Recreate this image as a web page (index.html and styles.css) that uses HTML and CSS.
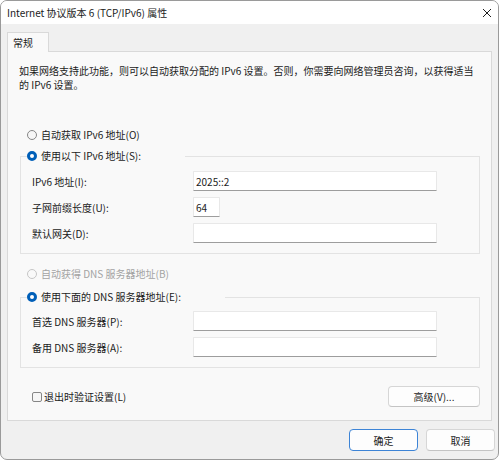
FILE: index.html
```html
<!DOCTYPE html>
<html lang="zh-CN">
<head>
    <meta charset="UTF-8">
    <meta name="viewport" content="width=device-width, initial-scale=1.0">
    <title>Internet 协议版本 6 (TCP/IPv6) 属性</title>
    <link rel="stylesheet" href="styles.css">
</head>
<body>
    <div class="window">
        <div class="titlebar">
            <span class="title">Internet 协议版本 6 (TCP/IPv6) 属性</span>
            <svg class="close" width="10" height="10" viewBox="0 0 10 10">
                <path d="M1 1 L9 9 M9 1 L1 9" stroke="#1f1f1f" stroke-width="1" fill="none"/>
            </svg>
        </div>
        <div class="content">
            <div class="tabs">
                <div class="tab">常规</div>
                <div class="tab-fill"></div>
            </div>
            <div class="panel">
                <p class="desc">如果网络支持此功能，则可以自动获取分配的 IPv6 设置。否则，你需要向网络管理员咨询，以获得适当<br>的 IPv6 设置。</p>

                <label class="option"><input type="radio" name="ip">自动获取 IPv6 地址(O)</label>
                <fieldset class="group">
                    <legend><label class="option"><input type="radio" name="ip" checked>使用以下 IPv6 地址(S):</label></legend>
                    <div class="fields">
                        <label for="addr">IPv6 地址(I):</label>
                        <input type="text" id="addr" class="field" value="2025::2">
                        <label for="prefix">子网前缀长度(U):</label>
                        <input type="text" id="prefix" class="field short" value="64">
                        <label for="gw">默认网关(D):</label>
                        <input type="text" id="gw" class="field">
                    </div>
                </fieldset>

                <label class="option option-dns disabled"><input type="radio" name="dns" disabled>自动获得 DNS 服务器地址(B)</label>
                <fieldset class="group group-dns">
                    <legend><label class="option"><input type="radio" name="dns" checked>使用下面的 DNS 服务器地址(E):</label></legend>
                    <div class="fields">
                        <label for="dns1">首选 DNS 服务器(P):</label>
                        <input type="text" id="dns1" class="field">
                        <label for="dns2">备用 DNS 服务器(A):</label>
                        <input type="text" id="dns2" class="field">
                    </div>
                </fieldset>

                <div class="bottom-row">
                    <label class="check"><input type="checkbox">退出时验证设置(L)</label>
                    <button class="btn btn-adv">高级(V)...</button>
                </div>
            </div>
            <div class="footer">
                <button class="btn btn-primary">确定</button>
                <button class="btn">取消</button>
            </div>
        </div>
    </div>
</body>
</html>
```

FILE: styles.css
```css
body {
    margin: 0;
    background: #ffffff;
    font-family: "Noto Sans CJK SC", sans-serif;
    font-size: 10px;
    color: #1b1b1b;
}
.window {
    box-sizing: border-box;
    width: 499px;
    height: 460px;
    border: 1px solid #9a9a9a;
    border-radius: 7px;
    background: #f0f0f0;
    overflow: hidden;
}
.titlebar {
    height: 23px;
    background: #ffffff;
    display: flex;
    align-items: center;
    justify-content: space-between;
    padding: 0 6px;
}
.title {
    line-height: 14px;
}
.close {
    margin-right: 0;
}
.content {
    padding: 8px 3px 0 6px;
}
.tabs {
    display: flex;
    margin-right: 3px;
}
.tab {
    box-sizing: border-box;
    width: 42px;
    height: 20px;
    padding-left: 5px;
    line-height: 19px;
    background: #f9f9f9;
    border: 1px solid #d9d9d9;
    border-bottom: none;
}
.tab-fill {
    flex: 1;
    border-bottom: 1px solid #d9d9d9;
}
.panel {
    margin-right: 3px;
    padding: 12px 11px 13px 12px;
    background: #f9f9f9;
    border: 1px solid #d9d9d9;
    border-top: none;
}
.desc {
    margin: 0 0 0 -1px;
    line-height: 14px;
}
.option {
    display: flex;
    align-items: center;
    gap: 4px;
    height: 14px;
    line-height: 14px;
}
.panel > .option {
    margin: 36px 0 0 7px;
}
.panel > .option-dns {
    margin-top: 13px;
}
.option.disabled {
    color: #a3a3a3;
}
input[type="radio"] {
    appearance: none;
    box-sizing: border-box;
    width: 10px;
    height: 10px;
    margin: 0;
    border: 1px solid #868686;
    border-radius: 50%;
    background: #f6f6f6;
}
input[type="radio"]:checked {
    border: 3px solid #005fb8;
    background: #ffffff;
}
input[type="radio"]:disabled {
    border-color: #c6c6c6;
    background: #f9f9f9;
}
.group {
    margin: 7px 0 0 0;
    padding: 0;
    border: 1px solid #e3e3e3;
}
.group-dns {
    margin-top: 9px;
}
.group legend {
    margin-left: 6px;
    padding: 0 44px 0 0;
}
.fields {
    display: grid;
    grid-template-columns: 161px 244px;
    row-gap: 6px;
    align-items: center;
    padding: 8px 11px 10px;
}
.group-dns .fields {
    padding-top: 7px;
}
.field {
    box-sizing: border-box;
    width: 244px;
    height: 20px;
    margin: 0;
    padding: 0 2px;
    font: inherit;
    color: #1b1b1b;
    background: #ffffff;
    border: 1px solid #e8e8e8;
    border-bottom-color: #9d9d9d;
    border-radius: 1px;
    outline: none;
}
.field.short {
    width: 27px;
}
.bottom-row {
    display: flex;
    justify-content: space-between;
    align-items: center;
    margin-top: 18px;
}
.check {
    display: flex;
    align-items: center;
    gap: 2px;
    margin-left: 12px;
    line-height: 14px;
}
input[type="checkbox"] {
    appearance: none;
    box-sizing: border-box;
    width: 10px;
    height: 10px;
    margin: 0;
    border: 1px solid #868686;
    border-radius: 2px;
    background: #f6f6f6;
}
.btn {
    box-sizing: border-box;
    height: 22px;
    padding: 0;
    font: inherit;
    color: #1b1b1b;
    background: #fdfdfd;
    border: 1px solid #d6d6d6;
    border-bottom-color: #c4c4c4;
    border-radius: 4px;
}
.btn-adv {
    width: 92px;
    height: 21px;
}
.footer {
    display: flex;
    justify-content: flex-end;
    gap: 8px;
    margin-top: 8px;
}
.footer .btn {
    width: 69px;
}
.btn-primary {
    border-color: #3d84d6;
}
```
